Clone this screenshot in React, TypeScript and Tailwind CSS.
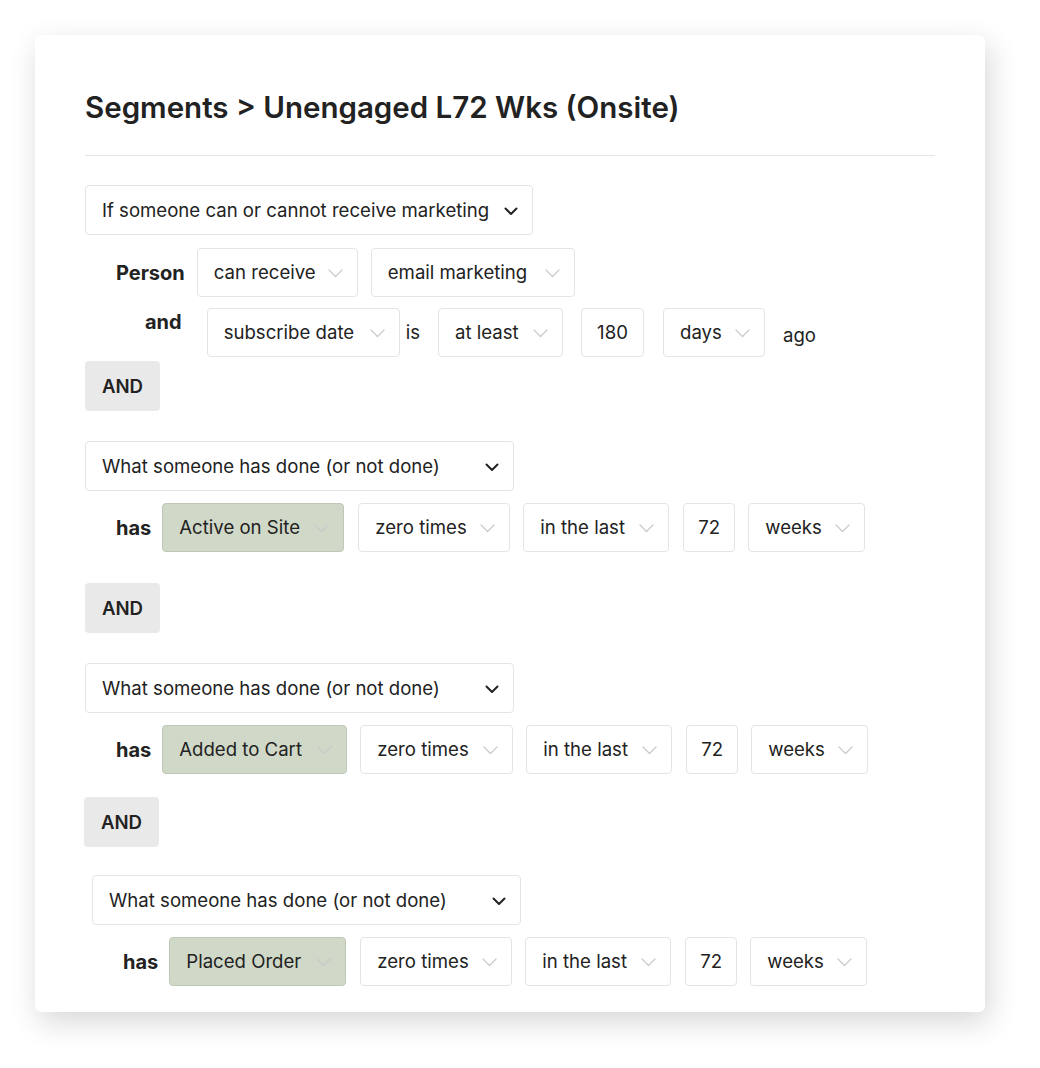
import React from "react";

function Chevron({ dark }: { dark?: boolean }) {
    if (dark) {
        return (
            <svg width="14" height="9" viewBox="0 0 14 9" fill="none" className="shrink-0">
                <path d="M1.5 1.5L7 7L12.5 1.5" stroke="#222" strokeWidth="2" strokeLinecap="round" strokeLinejoin="round" />
            </svg>
        );
    }
    return (
        <svg width="15" height="9" viewBox="0 0 15 9" fill="none" className="shrink-0">
            <path d="M1 1L7.5 7.5L14 1" stroke="#c9c9c9" strokeWidth="1.2" strokeLinecap="round" strokeLinejoin="round" />
        </svg>
    );
}

interface SelectProps {
    label: string;
    w: string;
    green?: boolean;
    noArrow?: boolean;
}

function Select({ label, w, green, noArrow }: SelectProps) {
    return (
        <div
            className={
                "flex items-center h-[49px] pt-px rounded-[4px] border text-[18.6px] shrink-0 " +
                w +
                (green ? " bg-[#d0d8c8] border-[#bfc7b6]" : " bg-white border-[#e4e4e4]") +
                (noArrow ? " justify-center px-0" : " justify-between pl-4 pr-[14px]")
            }
        >
            <span>{label}</span>
            {!noArrow && <Chevron />}
        </div>
    );
}

function Dropdown({ label, w }: { label: string; w: string }) {
    return (
        <div className={"flex items-center justify-between h-[50px] pt-[2px] pl-4 pr-[14px] rounded-[4px] border border-[#e4e4e4] bg-white text-[18.6px] " + w}>
            <span>{label}</span>
            <Chevron dark />
        </div>
    );
}

function AndButton({ className }: { className?: string }) {
    return (
        <div className={"flex items-center justify-center w-[75px] h-[50px] pt-px rounded-[4px] bg-[#e9e9e9] text-[18.6px] font-semibold " + (className ?? "")}>
            AND
        </div>
    );
}

interface HasRowProps {
    first: string;
    widths: string[];
    className?: string;
    firstGap: string;
}

function HasRow({ first, widths, className, firstGap }: HasRowProps) {
    return (
        <div className={"flex items-center " + (className ?? "")}>
            <span className="font-bold text-[20px] mr-[11px]">has</span>
            <Select label={first} w={widths[0]} green />
            <div className={"flex items-center " + firstGap}>
                <Select label="zero times" w={widths[1]} />
                <div className="ml-[13px]">
                    <Select label="in the last" w={widths[2]} />
                </div>
                <div className="ml-[14px]">
                    <Select label="72" w={widths[3]} noArrow />
                </div>
                <div className="ml-[13px]">
                    <Select label="weeks" w={widths[4]} />
                </div>
            </div>
        </div>
    );
}

export default function App() {
    return (
        <div className="w-[1040px] h-[1068px] bg-white pt-[35px] pl-[35px]" style={{ fontFamily: "Inter, 'Noto Sans', sans-serif" }}>
            <div className="w-[950px] h-[977px] bg-white rounded-[6px] shadow-[4px_10px_30px_rgba(0,0,0,0.16)] px-[50px] pt-[52px] text-[#222]">
                <h1 className="text-[29.5px] font-semibold leading-[40px]">
                    Segments &gt; Unengaged L72 Wks (Onsite)
                </h1>
                <div className="mt-[28px] h-px bg-[#e6e6e6]" />

                {/* Block 1 */}
                <Dropdown label="If someone can or cannot receive marketing" w="w-[448px] mt-[29px]" />
                <div className="flex items-center mt-[13px] pl-[31px]">
                    <span className="font-bold text-[20px] mr-[12px]">Person</span>
                    <div className="flex gap-[13px]">
                        <Select label="can receive" w="w-[161px]" />
                        <Select label="email marketing" w="w-[204px]" />
                    </div>
                </div>
                <div className="flex mt-[11px] pl-[60px]">
                    <span className="font-bold text-[20px] leading-[28px] mr-[25px]">and</span>
                    <div className="flex items-center">
                        <Select label="subscribe date" w="w-[193px]" />
                        <span className="text-[18.6px] ml-[6px] mr-[18px]">is</span>
                        <Select label="at least" w="w-[125px]" />
                        <div className="ml-[18px]">
                            <Select label="180" w="w-[63px]" noArrow />
                        </div>
                        <div className="ml-[19px]">
                            <Select label="days" w="w-[102px]" />
                        </div>
                        <span className="text-[18.6px] ml-[18px] mt-[7px]">ago</span>
                    </div>
                </div>
                <AndButton className="mt-[4px]" />

                {/* Block 2 */}
                <Dropdown label="What someone has done (or not done)" w="w-[429px] mt-[30px]" />
                <HasRow
                    first="Active on Site"
                    widths={["w-[182px]", "w-[152px]", "w-[146px]", "w-[52px]", "w-[117px]"]}
                    firstGap="ml-[14px]"
                    className="mt-[12px] pl-[31px]"
                />
                <AndButton className="mt-[31px]" />

                {/* Block 3 */}
                <Dropdown label="What someone has done (or not done)" w="w-[429px] mt-[30px]" />
                <HasRow
                    first="Added to Cart"
                    widths={["w-[185px]", "w-[153px]", "w-[146px]", "w-[52px]", "w-[117px]"]}
                    firstGap="ml-[13px]"
                    className="mt-[12px] pl-[31px]"
                />
                <AndButton className="mt-[23px] -ml-px" />

                {/* Block 4 */}
                <div className="pl-[7px]">
                    <Dropdown label="What someone has done (or not done)" w="w-[429px] mt-[28px]" />
                    <HasRow
                        first="Placed Order"
                        widths={["w-[177px]", "w-[152px]", "w-[146px]", "w-[52px]", "w-[117px]"]}
                        firstGap="ml-[14px]"
                        className="mt-[12px] pl-[31px]"
                    />
                </div>
            </div>
        </div>
    );
}
